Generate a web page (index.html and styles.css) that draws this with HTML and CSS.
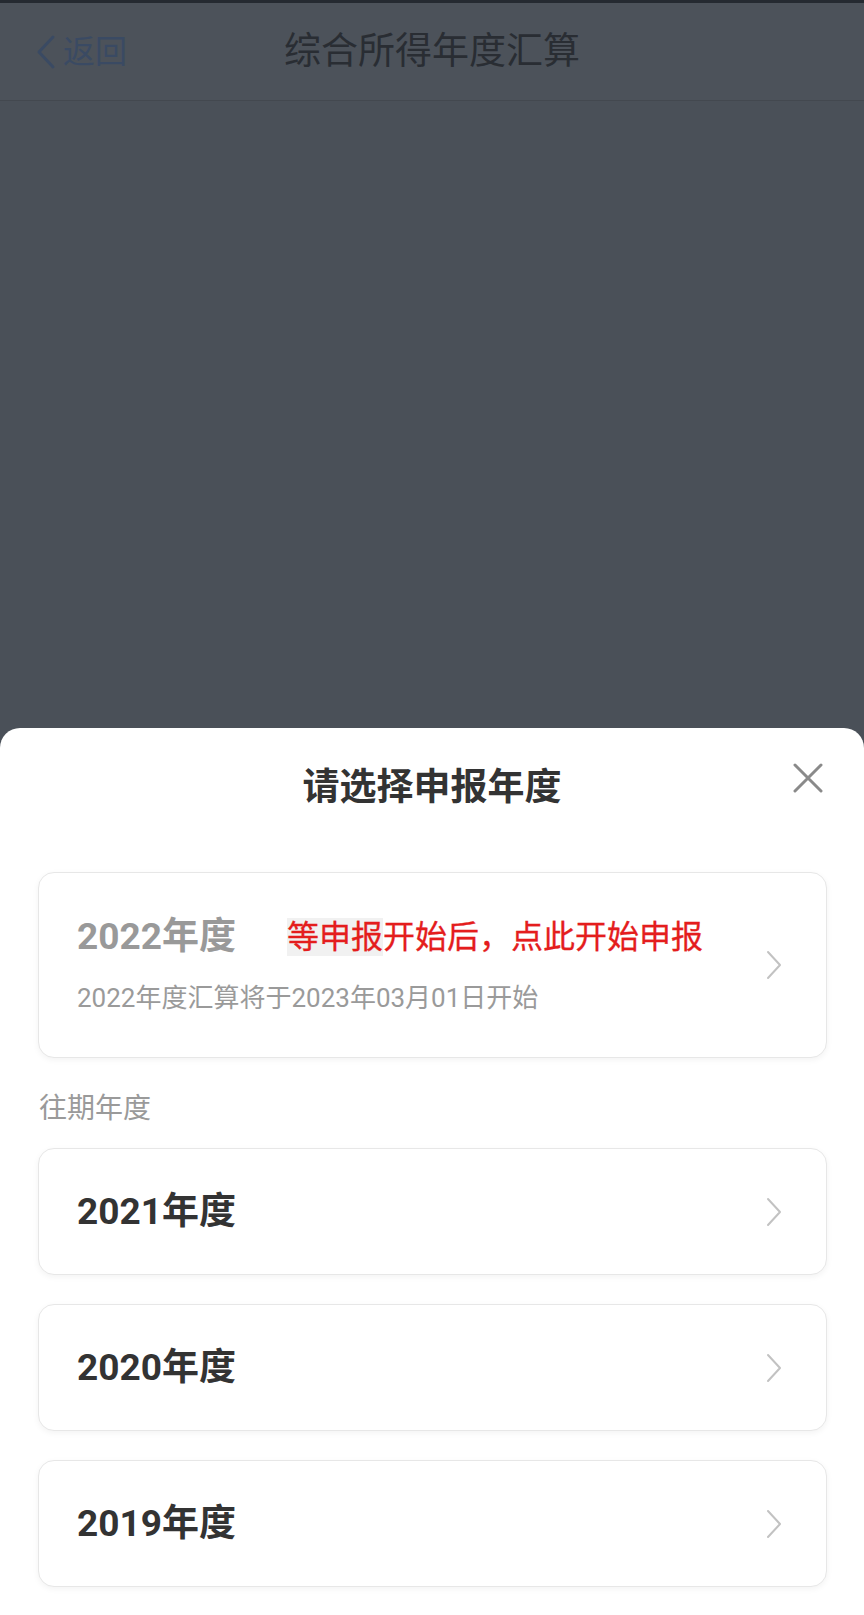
FILE: index.html
```html
<!DOCTYPE html>
<html lang="zh-CN">
<head>
<meta charset="utf-8">
<title>综合所得年度汇算</title>
<link rel="stylesheet" href="styles.css">
</head>
<body>
<div class="page">
  <div class="status-strip"></div>
  <header class="nav">
    <div class="nav-back">
      <svg class="nav-back-icon" viewBox="0 0 22 36" width="22" height="36"><path d="M18 3 L4 18 L18 33" fill="none" stroke="currentColor" stroke-width="3" stroke-linecap="round" stroke-linejoin="round"/></svg>
      <span class="nav-back-text">返回</span>
    </div>
    <div class="nav-title">综合所得年度汇算</div>
    <div class="nav-spacer"></div>
  </header>
  <div class="overlay"></div>
  <section class="sheet">
    <div class="sheet-header">
      <div></div>
      <h1 class="sheet-title">请选择申报年度</h1>
      <button class="sheet-close" aria-label="关闭">
        <svg viewBox="0 0 30 30" width="30" height="30"><path d="M2 2 L28 28 M28 2 L2 28" fill="none" stroke="currentColor" stroke-width="3" stroke-linecap="round"/></svg>
      </button>
    </div>
    <div class="sheet-body">
      <div class="card card-current">
        <div class="card-main">
          <div class="card-title-row">
            <span class="card-title muted">2022年度</span>
            <span class="card-note"><span class="note-mark">等申报</span>开始后，点此开始申报</span>
          </div>
          <div class="card-sub">2022年度汇算将于2023年03月01日开始</div>
        </div>
        <svg class="chevron" viewBox="0 0 18 30" width="18" height="30"><path d="M3 2 L15 15 L3 28" fill="none" stroke="currentColor" stroke-width="2" stroke-linecap="round" stroke-linejoin="round"/></svg>
      </div>
      <div class="section-label">往期年度</div>
      <div class="card-list">
        <div class="card card-year">
          <span class="card-title">2021年度</span>
          <svg class="chevron" viewBox="0 0 18 30" width="18" height="30"><path d="M3 2 L15 15 L3 28" fill="none" stroke="currentColor" stroke-width="2" stroke-linecap="round" stroke-linejoin="round"/></svg>
        </div>
        <div class="card card-year">
          <span class="card-title">2020年度</span>
          <svg class="chevron" viewBox="0 0 18 30" width="18" height="30"><path d="M3 2 L15 15 L3 28" fill="none" stroke="currentColor" stroke-width="2" stroke-linecap="round" stroke-linejoin="round"/></svg>
        </div>
        <div class="card card-year">
          <span class="card-title">2019年度</span>
          <svg class="chevron" viewBox="0 0 18 30" width="18" height="30"><path d="M3 2 L15 15 L3 28" fill="none" stroke="currentColor" stroke-width="2" stroke-linecap="round" stroke-linejoin="round"/></svg>
        </div>
      </div>
    </div>
  </section>
</div>
</body>
</html>
```
FILE: styles.css
```css
html, body {
  margin: 0;
  padding: 0;
}
body {
  background: #4a5058;
  font-family: Roboto, "Noto Sans CJK SC", "Noto Sans", sans-serif;
}
.page {
  width: 864px;
  height: 1615px;
  display: flex;
  flex-direction: column;
  overflow: hidden;
}
.status-strip {
  height: 3px;
  background: #252a31;
  flex: none;
}
.nav {
  flex: none;
  height: 97px;
  background: #4c525a;
  border-bottom: 1px solid #43484f;
  display: grid;
  grid-template-columns: 1fr auto 1fr;
  align-items: center;
}
.nav-back {
  display: flex;
  align-items: center;
  padding-left: 35px;
  color: #3a4a63;
}
.nav-back-icon {
  display: block;
  margin-right: 6px;
}
.nav-back-text {
  font-size: 32px;
  line-height: 40px;
}
.nav-title {
  font-size: 37px;
  line-height: 44px;
  color: #292d33;
}
.overlay {
  flex: 1;
}
.sheet {
  flex: none;
  background: #ffffff;
  border-radius: 20px 20px 0 0;
  display: flex;
  flex-direction: column;
}
.sheet-header {
  height: 120px;
  display: grid;
  grid-template-columns: 1fr auto 1fr;
  align-items: center;
}
.sheet-title {
  margin: 0;
  font-size: 37px;
  line-height: 50px;
  font-weight: 700;
  color: #333333;
}
.sheet-close {
  justify-self: end;
  align-self: start;
  margin-top: 35px;
  margin-right: 41px;
  width: 30px;
  height: 30px;
  padding: 0;
  border: 0;
  background: none;
  color: #8a8a8a;
}
.sheet-close svg {
  display: block;
}
.sheet-body {
  padding: 24px 37px 28px 38px;
  display: flex;
  flex-direction: column;
}
.card {
  box-sizing: border-box;
  border: 1px solid #e7e7e7;
  border-radius: 16px;
  background: #ffffff;
  box-shadow: 0 2px 6px rgba(0, 0, 0, 0.05);
  display: flex;
  align-items: center;
  justify-content: space-between;
  padding: 0 43px 0 38px;
}
.card-current {
  height: 186px;
}
.card-main {
  display: flex;
  flex-direction: column;
  padding-bottom: 2px;
}
.card-title-row {
  display: flex;
  align-items: center;
  height: 50px;
}
.card-title {
  font-size: 37px;
  line-height: 50px;
  font-weight: 700;
  color: #333333;
}
.card-title.muted {
  color: #999999;
}
.card-note {
  margin-left: 51px;
  font-size: 32px;
  line-height: 40px;
  color: #e41d1d;
  -webkit-text-stroke: 0.3px #e41d1d;
}
.note-mark {
  background: #f1f1f1;
}
.card-sub {
  margin-top: 18px;
  font-size: 26px;
  line-height: 36px;
  color: #9a9a9a;
}
.chevron {
  display: block;
  color: #c2c2c2;
  flex: none;
}
.section-label {
  margin: 31px 0 19px 1px;
  font-size: 28px;
  line-height: 40px;
  color: #9a9a9a;
}
.card-list {
  display: flex;
  flex-direction: column;
  gap: 29px;
}
.card-year {
  height: 127px;
}
```
